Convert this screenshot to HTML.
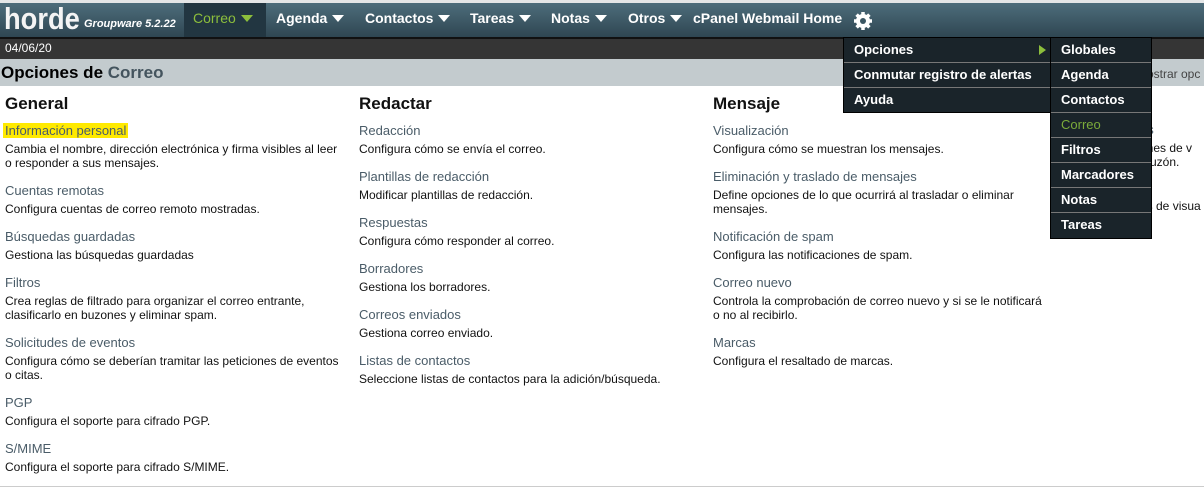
<!DOCTYPE html><html><head><meta charset="utf-8"><style>
*{margin:0;padding:0;box-sizing:border-box}
body{width:1204px;height:501px;background:#fff;font-family:"Liberation Sans",Arial,sans-serif;position:relative;overflow:hidden}
#top{position:absolute;left:0;top:0;width:1204px;height:3px;background:#e4e6e7}
#nav{position:absolute;left:0;top:3px;width:1204px;height:34px;background:linear-gradient(#4d6d7b,#2f4652)}
#logo{position:absolute;left:4px;top:0;height:34px;width:176px;color:#fff}
#logo b{font-size:31px;font-weight:bold;position:absolute;top:-2px;left:0;font-family:"Liberation Sans",sans-serif;color:#f4f4f4;transform:scaleX(0.88);transform-origin:left}
#logo i{position:absolute;left:80px;top:15px;font-size:11px;font-weight:bold;white-space:nowrap}
.m{position:absolute;top:0;height:34px;line-height:31px;color:#fff;font-weight:bold;font-size:14px;white-space:nowrap}
.tri{display:inline-block;width:0;height:0;border-left:6px solid transparent;border-right:6px solid transparent;border-top:7px solid #fff;margin-left:5px;vertical-align:1px}
#act{left:184px;width:82px;background:#223641;color:#8cbe3c;padding-left:9px;font-weight:normal}
#act .tri{border-top-color:#8cbe3c}
#bl{position:absolute;top:37px;left:0;width:1204px;height:2px;background:#111}
#date{position:absolute;top:39px;left:0;width:1204px;height:20px;background:#353535;color:#fff;font-size:12px;padding:2px 5px}
#hd{position:absolute;top:59px;left:0;width:1204px;height:27px;background:#c3cbce;font-size:17px;font-weight:bold;padding:4px 1px}
#hd span{color:#44545e}
#hd em{position:absolute;left:1147px;top:8px;font-size:12px;font-weight:normal;font-style:normal;color:#444}
.col{position:absolute;top:94px;font-size:12px;color:#111}
.col h2{font-size:17px;margin-bottom:10px}
.t{color:#4a5c68;font-size:13px;height:18px;line-height:14px}
.d{line-height:14px;margin-bottom:14px}
.hl{background:#ffea00;padding:0 2px;margin-left:-2px}
.dd{position:absolute;background:#1a242a;border:1px solid #000;color:#fff;font-weight:bold;font-size:13px}
.dd div{height:25px;line-height:24px;padding-left:10px;border-bottom:1px solid #777}
.dd div:last-child{border-bottom:none}
#foot{position:absolute;left:0;top:486px;width:1204px;height:1px;background:#ccc}
</style></head><body>
<div id="top"></div>
<div id="nav">
<div id="logo"><b>horde</b><i>Groupware 5.2.22</i></div>
<div class="m" id="act">Correo<span class="tri"></span></div>
<div class="m" style="left:276px">Agenda<span class="tri"></span></div>
<div class="m" style="left:365px">Contactos<span class="tri"></span></div>
<div class="m" style="left:470px">Tareas<span class="tri"></span></div>
<div class="m" style="left:551px">Notas<span class="tri"></span></div>
<div class="m" style="left:628px">Otros<span class="tri"></span></div>
<div class="m" style="left:693px">cPanel Webmail Home</div>
<svg style="position:absolute;left:853px;top:8px" width="20" height="20" viewBox="0 0 20 20"><g fill="#fff"><circle cx="10" cy="10" r="7"/><g stroke="#fff" stroke-width="3.5"><line x1="10" y1="1" x2="10" y2="19"/><line x1="1" y1="10" x2="19" y2="10"/><line x1="3.6" y1="3.6" x2="16.4" y2="16.4"/><line x1="16.4" y1="3.6" x2="3.6" y2="16.4"/></g></g><circle cx="10" cy="10" r="3" fill="#3a5663"/></svg>
</div>
<div id="bl"></div>
<div id="date">04/06/20</div>
<div id="hd">Opciones de <span>Correo</span><em>ostrar opc</em></div>

<div class="col" style="left:5px"><h2>General</h2>
<div class="t"><span class="hl">Información personal</span></div><div class="d">Cambia el nombre, dirección electrónica y firma visibles al leer<br>o responder a sus mensajes.</div>
<div class="t">Cuentas remotas</div><div class="d">Configura cuentas de correo remoto mostradas.</div>
<div class="t">Búsquedas guardadas</div><div class="d">Gestiona las búsquedas guardadas</div>
<div class="t">Filtros</div><div class="d">Crea reglas de filtrado para organizar el correo entrante,<br>clasificarlo en buzones y eliminar spam.</div>
<div class="t">Solicitudes de eventos</div><div class="d">Configura cómo se deberían tramitar las peticiones de eventos<br>o citas.</div>
<div class="t">PGP</div><div class="d">Configura el soporte para cifrado PGP.</div>
<div class="t">S/MIME</div><div class="d">Configura el soporte para cifrado S/MIME.</div>
</div>
<div class="col" style="left:359px"><h2>Redactar</h2>
<div class="t">Redacción</div><div class="d">Configura cómo se envía el correo.</div>
<div class="t">Plantillas de redacción</div><div class="d">Modificar plantillas de redacción.</div>
<div class="t">Respuestas</div><div class="d">Configura cómo responder al correo.</div>
<div class="t">Borradores</div><div class="d">Gestiona los borradores.</div>
<div class="t">Correos enviados</div><div class="d">Gestiona correo enviado.</div>
<div class="t">Listas de contactos</div><div class="d">Seleccione listas de contactos para la adición/búsqueda.</div>
</div>
<div class="col" style="left:713px"><h2>Mensaje</h2>
<div class="t">Visualización</div><div class="d">Configura cómo se muestran los mensajes.</div>
<div class="t">Eliminación y traslado de mensajes</div><div class="d">Define opciones de lo que ocurrirá al trasladar o eliminar<br>mensajes.</div>
<div class="t">Notificación de spam</div><div class="d">Configura las notificaciones de spam.</div>
<div class="t">Correo nuevo</div><div class="d">Controla la comprobación de correo nuevo y si se le notificará<br>o no al recibirlo.</div>
<div class="t">Marcas</div><div class="d">Configura el resaltado de marcas.</div>
</div>
<div class="col" style="left:1140px;top:123px">
<div class="t">es</div><div class="d">ones de v<br>&nbsp;buzón.</div>
<div class="t" style="margin-top:-2px">o</div><div class="d">es de visua</div>
</div>

<div class="dd" style="left:843px;top:37px;width:208px;height:76px">
<div style="position:relative">Opciones<span style="position:absolute;right:4px;top:7px;border-top:5px solid transparent;border-bottom:5px solid transparent;border-left:7px solid #8cbe3c"></span></div>
<div>Conmutar registro de alertas</div><div>Ayuda</div></div>
<div class="dd" style="left:1050px;top:37px;width:102px;height:202px">
<div>Globales</div><div>Agenda</div><div>Contactos</div><div style="color:#7bab3a;font-weight:normal">Correo</div><div>Filtros</div><div>Marcadores</div><div>Notas</div><div>Tareas</div></div>
<div id="foot"></div>
</body></html>
